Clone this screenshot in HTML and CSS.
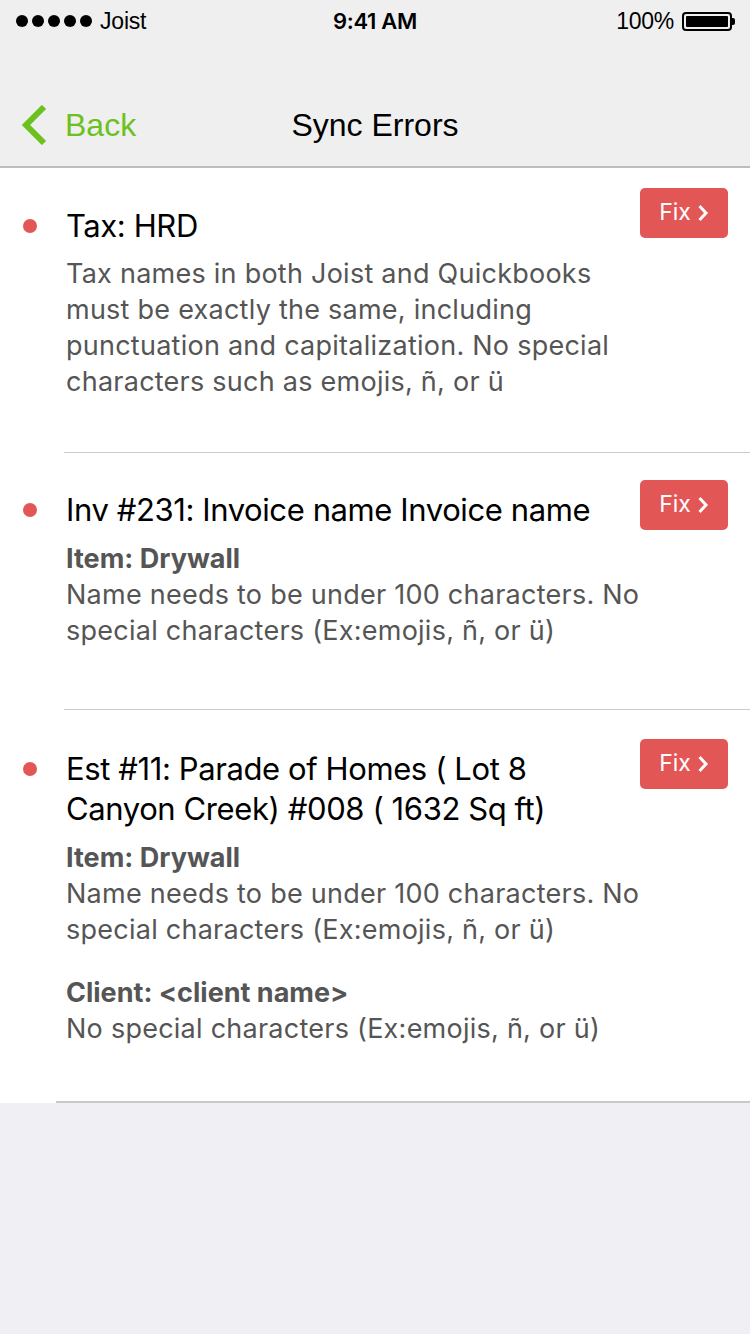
FILE: index.html
```html
<!DOCTYPE html>
<html>
<head>
<meta charset="utf-8">
<link rel="stylesheet" href="styles.css">
</head>
<body>
<div class="screen">
  <header class="top">
    <div class="status">
      <div class="status-left">
        <span class="signal"><i></i><i></i><i></i><i></i><i></i></span>
        <span class="carrier">Joist</span>
      </div>
      <div class="status-time">9:41 AM</div>
      <div class="status-right">
        <span class="pct">100%</span>
        <span class="battery"><span class="battery-fill"></span></span>
        <span class="battery-tip"></span>
      </div>
    </div>
    <nav class="nav">
      <a class="back">
        <svg class="back-chev" width="30" height="40" viewBox="0 0 30 40"><path d="M25 2 L7 20 L25 38" fill="none" stroke="#6cc11f" stroke-width="6"/></svg>
        <span>Back</span>
      </a>
      <h1 class="nav-title">Sync Errors</h1>
    </nav>
  </header>

  <main class="list">
    <section class="item item-first">
      <span class="dot"></span>
      <div class="item-body">
        <div class="item-head">
          <h2 class="item-title">Tax: HRD</h2>
          <button class="fix">Fix<svg width="12" height="18" viewBox="0 0 12 18"><path d="M2.5 2 L9 9 L2.5 16" fill="none" stroke="#fff" stroke-width="3"/></svg></button>
        </div>
        <p class="desc">Tax names in both Joist and Quickbooks must be exactly the same, including punctuation and capitalization. No special characters such as emojis, ñ, or ü</p>
      </div>
    </section>

    <section class="item item-mid">
      <span class="dot"></span>
      <div class="item-body">
        <div class="item-head">
          <h2 class="item-title">Inv #231: Invoice name Invoice name</h2>
          <button class="fix">Fix<svg width="12" height="18" viewBox="0 0 12 18"><path d="M2.5 2 L9 9 L2.5 16" fill="none" stroke="#fff" stroke-width="3"/></svg></button>
        </div>
        <div class="error">
          <div class="label">Item: Drywall</div>
          <p class="desc">Name needs to be under 100 characters. No special characters (Ex:emojis, ñ, or ü)</p>
        </div>
      </div>
    </section>

    <section class="item item-last">
      <span class="dot"></span>
      <div class="item-body">
        <div class="item-head">
          <h2 class="item-title">Est #11: Parade of Homes ( Lot 8 Canyon Creek) #008 ( 1632 Sq ft)</h2>
          <button class="fix">Fix<svg width="12" height="18" viewBox="0 0 12 18"><path d="M2.5 2 L9 9 L2.5 16" fill="none" stroke="#fff" stroke-width="3"/></svg></button>
        </div>
        <div class="error">
          <div class="label">Item: Drywall</div>
          <p class="desc">Name needs to be under 100 characters. No special characters (Ex:emojis, ñ, or ü)</p>
        </div>
        <div class="error">
          <div class="label">Client: &lt;client name&gt;</div>
          <p class="desc">No special characters (Ex:emojis, ñ, or ü)</p>
        </div>
      </div>
    </section>
  </main>
</div>
</body>
</html>
```

FILE: styles.css
```css
* { box-sizing: border-box; }
html, body {
  margin: 0;
  padding: 0;
  background: #efeff4;
}
body {
  font-family: Inter, "Liberation Sans", sans-serif;
  color: #000;
}
.screen {
  width: 750px;
  min-height: 1334px;
  background: #efeff4;
}
.top {
  background: #efefef;
  border-bottom: 2px solid #bdbdbd;
}
.status {
  height: 42px;
  display: flex;
  align-items: center;
  justify-content: space-between;
  padding: 0 16px 0 16px;
  font-family: "Liberation Sans", sans-serif;
  font-size: 23px;
}
.status-left {
  display: flex;
  align-items: center;
  gap: 8px;
  width: 200px;
}
.signal {
  display: flex;
  gap: 4px;
}
.signal i {
  display: block;
  width: 12px;
  height: 12px;
  border-radius: 50%;
  background: #000;
}
.carrier { letter-spacing: -0.2px; }
.status-time {
  font-family: Inter, "Liberation Sans", sans-serif;
  font-weight: 600;
  font-size: 22px;
  letter-spacing: -0.3px;
}
.status-right {
  width: 200px;
  display: flex;
  justify-content: flex-end;
  align-items: center;
}
.pct { margin-right: 8px; letter-spacing: -0.3px; }
.battery {
  width: 50px;
  height: 19px;
  border: 2px solid #000;
  border-radius: 4px;
  padding: 2px;
  display: flex;
}
.battery-fill {
  flex: 1;
  background: #000;
  border-radius: 1px;
}
.battery-tip {
  width: 3px;
  height: 7px;
  background: #000;
  border-radius: 0 2px 2px 0;
  margin-right: -1px;
}
.nav {
  height: 124px;
  display: flex;
  align-items: center;
  position: relative;
  padding-top: 42px;
}
.back {
  display: flex;
  align-items: center;
  color: #6cc11f;
  font-family: "Liberation Sans", sans-serif;
  font-size: 32px;
  padding-left: 19px;
  gap: 16px;
}
.back-chev { display: block; }
.nav-title {
  position: absolute;
  left: 0;
  right: 0;
  top: 42px;
  bottom: 0;
  margin: 0;
  display: flex;
  align-items: center;
  justify-content: center;
  font-family: "Liberation Sans", sans-serif;
  font-size: 32px;
  font-weight: normal;
  pointer-events: none;
}
.list {
  background: #fff;
}
.item {
  display: flex;
  padding: 37px 22px 56px 0;
  position: relative;
}
.item::after {
  content: "";
  position: absolute;
  left: 64px;
  right: 0;
  bottom: 0;
  height: 1px;
  background: #cbcbcb;
}
.item-first { padding-top: 38px; padding-bottom: 53px; }
.item-mid { padding-bottom: 61px; }
.item-last { padding-top: 39px; }
.item-last::after { left: 56px; height: 2px; background: #c8c8c8; }
.dot {
  flex: none;
  width: 14px;
  height: 14px;
  border-radius: 50%;
  background: #e35656;
  margin: 13px 29px 0 23px;
}
.item-body {
  flex: 1;
  min-width: 0;
}
.item-head {
  display: flex;
  align-items: flex-start;
  gap: 24px;
}
.item-title {
  flex: 1;
  margin: 0;
  font-size: 31px;
  line-height: 40px;
  font-weight: 400;
  letter-spacing: -0.4px;
  color: #000;
}
.fix {
  flex: none;
  width: 88px;
  height: 50px;
  margin-top: -10px;
  border: 0;
  border-radius: 5px;
  background: #e35656;
  color: #fff;
  font-family: inherit;
  font-size: 23px;
  display: flex;
  align-items: center;
  justify-content: center;
  gap: 6px;
  padding: 0 0 2px 0;
}
.fix svg { display: block; margin-top: 1px; }
.item-first .fix { margin-top: -18px; }
.desc {
  margin: 0;
  font-size: 27px;
  line-height: 36px;
  letter-spacing: 0.25px;
  color: #555;
  padding-right: 84px;
}
.item-first .desc { margin-top: 10px; }
.error { margin-top: 11px; }
.error + .error { margin-top: 27px; }
.label {
  font-size: 27px;
  line-height: 36px;
  font-weight: 700;
  color: #555;
}
```
